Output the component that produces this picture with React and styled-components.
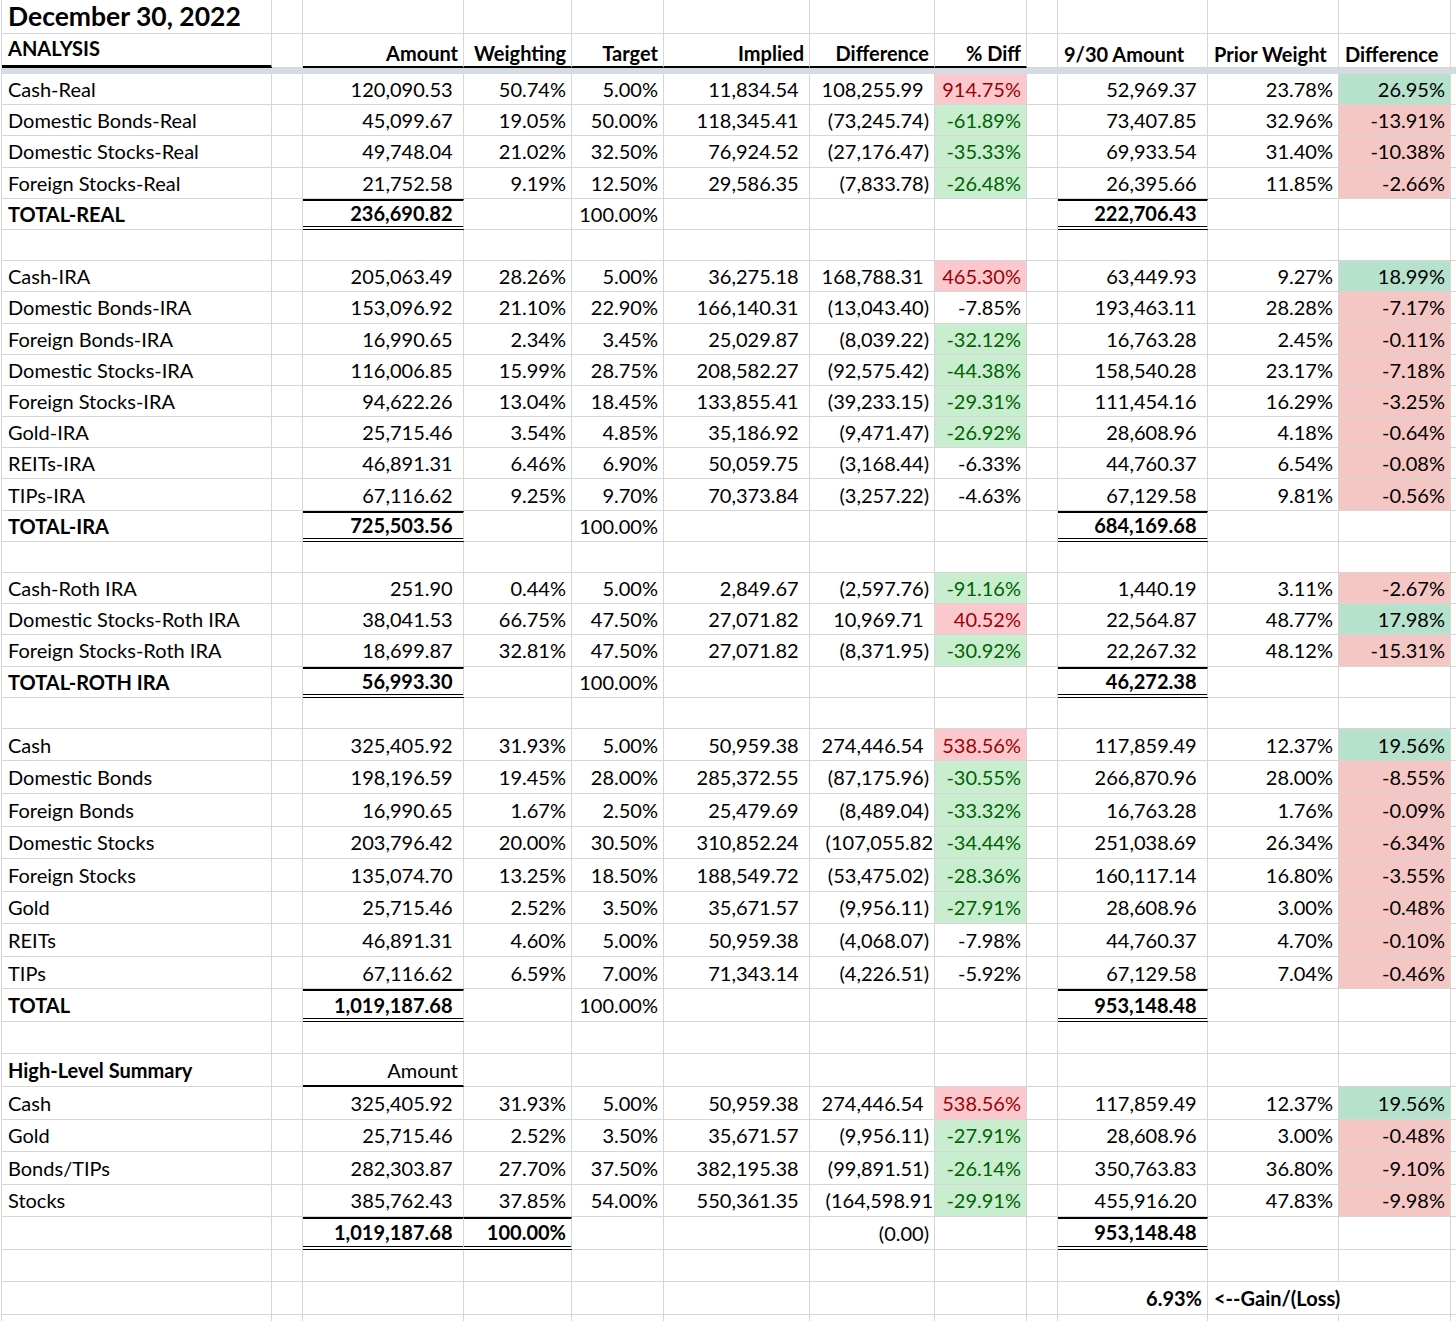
import React from "react";
import styled, { createGlobalStyle, css } from "styled-components";

const GlobalStyle = createGlobalStyle`
  html, body {
    margin: 0;
    padding: 0;
    background: #fff;
  }
  body {
    font-family: Lato, "Open Sans", sans-serif;
    color: #000;
  }
`;

const GRID = "#d6d6d6";
const COLS =
  "270px 31px 161px 108px 92px 146px 125px 92px 31px 150px 131px 112px 1fr";

const tones = {
  bad: { bg: "#fbc9cd", fg: "#9c0006" },
  good: { bg: "#c8eecf", fg: "#006100" },
  up: { bg: "#b6e1cd", fg: "#000" },
  down: { bg: "#f4c7c4", fg: "#000" },
};

const Sheet = styled.div`
  width: 1456px;
  padding-left: 1px;
  box-sizing: border-box;
`;

const Row = styled.div`
  display: grid;
  grid-template-columns: ${COLS};
  height: ${({ $h }) => $h}px;
  border-left: 1px solid ${GRID};
`;

const Freeze = styled.div`
  height: 6px;
  background: #d6dae1;
`;

const Cell = styled.div`
  box-sizing: border-box;
  display: flex;
  align-items: center;
  justify-content: ${({ $left }) => ($left ? "flex-start" : "flex-end")};
  padding: 0 5px 0 6px;
  min-width: 0;
  border-right: 1px solid ${({ $open }) => ($open ? "transparent" : GRID)};
  border-bottom: 1px solid ${GRID};
  font-size: 20px;
  line-height: 20px;
  font-weight: ${({ $bold }) => ($bold ? 700 : 400)};
  white-space: nowrap;
  background: ${({ $tone }) => ($tone ? tones[$tone].bg : "transparent")};
  color: ${({ $tone }) => ($tone ? tones[$tone].fg : "#000")};

  ${({ $under }) =>
    $under &&
    css`
      border-bottom: 2px solid #000;
    `}
  ${({ $sum }) =>
    $sum &&
    css`
      border-top: 2px solid #000;
      border-bottom: 4px double #000;
    `}
  ${({ $clip }) =>
    $clip &&
    css`
      padding-right: 1px;
    `}
`;

const TitleCell = styled(Cell)`
  align-items: flex-end;
  padding-bottom: 4px;
  font-size: 26.5px;
  line-height: 26px;
  font-weight: 700;
`;

const HeadCell = styled(Cell)`
  align-items: ${({ $mid }) => ($mid ? "center" : "flex-end")};
  padding-bottom: ${({ $mid }) => ($mid ? "4px" : "3px")};
  font-weight: 700;
  ${({ $rule }) =>
    $rule &&
    css`
      border-bottom: ${$rule}px solid #000;
    `}
`;

const Paren = styled.span`
  visibility: hidden;
`;

const TOP = 31.19;
const LOW = 32.56;

const ACCT = [2, 5, 6, 9];

const diffTone = (v) => {
  const n = parseFloat(v);
  if (n > 0) return "bad";
  if (n <= -25) return "good";
  return undefined;
};

const data = (label, v, h) => ({ kind: "data", label, v, h });
const total = (label, amount, prior, h) => ({ kind: "total", label, amount, prior, h });
const blank = (h) => ({ kind: "blank", h });

const rows = [
  data("Cash-Real", ["120,090.53", "50.74%", "5.00%", "11,834.54", "108,255.99", "914.75%", "52,969.37", "23.78%", "26.95%"], TOP),
  data("Domestic Bonds-Real", ["45,099.67", "19.05%", "50.00%", "118,345.41", "(73,245.74)", "-61.89%", "73,407.85", "32.96%", "-13.91%"], TOP),
  data("Domestic Stocks-Real", ["49,748.04", "21.02%", "32.50%", "76,924.52", "(27,176.47)", "-35.33%", "69,933.54", "31.40%", "-10.38%"], TOP),
  data("Foreign Stocks-Real", ["21,752.58", "9.19%", "12.50%", "29,586.35", "(7,833.78)", "-26.48%", "26,395.66", "11.85%", "-2.66%"], TOP),
  total("TOTAL-REAL", "236,690.82", "222,706.43", TOP),
  blank(TOP),
  data("Cash-IRA", ["205,063.49", "28.26%", "5.00%", "36,275.18", "168,788.31", "465.30%", "63,449.93", "9.27%", "18.99%"], TOP),
  data("Domestic Bonds-IRA", ["153,096.92", "21.10%", "22.90%", "166,140.31", "(13,043.40)", "-7.85%", "193,463.11", "28.28%", "-7.17%"], TOP),
  data("Foreign Bonds-IRA", ["16,990.65", "2.34%", "3.45%", "25,029.87", "(8,039.22)", "-32.12%", "16,763.28", "2.45%", "-0.11%"], TOP),
  data("Domestic Stocks-IRA", ["116,006.85", "15.99%", "28.75%", "208,582.27", "(92,575.42)", "-44.38%", "158,540.28", "23.17%", "-7.18%"], TOP),
  data("Foreign Stocks-IRA", ["94,622.26", "13.04%", "18.45%", "133,855.41", "(39,233.15)", "-29.31%", "111,454.16", "16.29%", "-3.25%"], TOP),
  data("Gold-IRA", ["25,715.46", "3.54%", "4.85%", "35,186.92", "(9,471.47)", "-26.92%", "28,608.96", "4.18%", "-0.64%"], TOP),
  data("REITs-IRA", ["46,891.31", "6.46%", "6.90%", "50,059.75", "(3,168.44)", "-6.33%", "44,760.37", "6.54%", "-0.08%"], TOP),
  data("TIPs-IRA", ["67,116.62", "9.25%", "9.70%", "70,373.84", "(3,257.22)", "-4.63%", "67,129.58", "9.81%", "-0.56%"], TOP),
  total("TOTAL-IRA", "725,503.56", "684,169.68", TOP),
  blank(TOP),
  data("Cash-Roth IRA", ["251.90", "0.44%", "5.00%", "2,849.67", "(2,597.76)", "-91.16%", "1,440.19", "3.11%", "-2.67%"], TOP),
  data("Domestic Stocks-Roth IRA", ["38,041.53", "66.75%", "47.50%", "27,071.82", "10,969.71", "40.52%", "22,564.87", "48.77%", "17.98%"], TOP),
  data("Foreign Stocks-Roth IRA", ["18,699.87", "32.81%", "47.50%", "27,071.82", "(8,371.95)", "-30.92%", "22,267.32", "48.12%", "-15.31%"], TOP),
  total("TOTAL-ROTH IRA", "56,993.30", "46,272.38", TOP),
  blank(TOP),
  data("Cash", ["325,405.92", "31.93%", "5.00%", "50,959.38", "274,446.54", "538.56%", "117,859.49", "12.37%", "19.56%"], LOW),
  data("Domestic Bonds", ["198,196.59", "19.45%", "28.00%", "285,372.55", "(87,175.96)", "-30.55%", "266,870.96", "28.00%", "-8.55%"], LOW),
  data("Foreign Bonds", ["16,990.65", "1.67%", "2.50%", "25,479.69", "(8,489.04)", "-33.32%", "16,763.28", "1.76%", "-0.09%"], LOW),
  data("Domestic Stocks", ["203,796.42", "20.00%", "30.50%", "310,852.24", "(107,055.82", "-34.44%", "251,038.69", "26.34%", "-6.34%"], LOW),
  data("Foreign Stocks", ["135,074.70", "13.25%", "18.50%", "188,549.72", "(53,475.02)", "-28.36%", "160,117.14", "16.80%", "-3.55%"], LOW),
  data("Gold", ["25,715.46", "2.52%", "3.50%", "35,671.57", "(9,956.11)", "-27.91%", "28,608.96", "3.00%", "-0.48%"], LOW),
  data("REITs", ["46,891.31", "4.60%", "5.00%", "50,959.38", "(4,068.07)", "-7.98%", "44,760.37", "4.70%", "-0.10%"], LOW),
  data("TIPs", ["67,116.62", "6.59%", "7.00%", "71,343.14", "(4,226.51)", "-5.92%", "67,129.58", "7.04%", "-0.46%"], LOW),
  total("TOTAL", "1,019,187.68", "953,148.48", LOW),
  blank(LOW),
  { kind: "summaryHead", h: LOW },
  data("Cash", ["325,405.92", "31.93%", "5.00%", "50,959.38", "274,446.54", "538.56%", "117,859.49", "12.37%", "19.56%"], LOW),
  data("Gold", ["25,715.46", "2.52%", "3.50%", "35,671.57", "(9,956.11)", "-27.91%", "28,608.96", "3.00%", "-0.48%"], LOW),
  data("Bonds/TIPs", ["282,303.87", "27.70%", "37.50%", "382,195.38", "(99,891.51)", "-26.14%", "350,763.83", "36.80%", "-9.10%"], LOW),
  data("Stocks", ["385,762.43", "37.85%", "54.00%", "550,361.35", "(164,598.91", "-29.91%", "455,916.20", "47.83%", "-9.98%"], LOW),
  { kind: "summaryTotal", h: LOW },
  blank(LOW),
  { kind: "gain", h: LOW },
  blank(LOW),
];

// puts a hidden ")" after positive accounting numbers, like Excel's _) format
const Num = ({ col, text }) => {
  if (!text) return null;
  const pad = ACCT.includes(col) && !text.startsWith("(") && !text.endsWith("%");
  return (
    <>
      {text}
      {pad && <Paren>)</Paren>}
    </>
  );
};

const Empty = ({ from = 0, to = 13 }) =>
  Array.from({ length: to - from }, (_, i) => <Cell key={from + i} />);

const DataRow = ({ label, v }) => {
  const [c, d, e, f, g, h, j, k, l] = v;
  const values = { 2: c, 3: d, 4: e, 5: f, 6: g, 7: h, 9: j, 10: k, 11: l };
  return (
    <>
      <Cell $left>{label}</Cell>
      {Array.from({ length: 12 }, (_, i) => {
        const col = i + 1;
        const text = values[col];
        let tone;
        if (col === 7) tone = diffTone(text);
        if (col === 11) tone = parseFloat(text) > 0 ? "up" : "down";
        const clip = col === 6 && text && !text.endsWith(")") && text.startsWith("(");
        return (
          <Cell key={col} $tone={tone} $clip={clip}>
            <Num col={col} text={text} />
          </Cell>
        );
      })}
    </>
  );
};

const TotalRow = ({ label, amount, prior }) => (
  <>
    <Cell $left $bold>
      {label}
    </Cell>
    <Cell />
    <Cell $bold $sum>
      <Num col={2} text={amount} />
    </Cell>
    <Cell />
    <Cell>100.00%</Cell>
    <Empty from={5} to={9} />
    <Cell $bold $sum>
      <Num col={9} text={prior} />
    </Cell>
    <Empty from={10} to={13} />
  </>
);

const renderRow = (row) => {
  switch (row.kind) {
    case "data":
      return <DataRow label={row.label} v={row.v} />;
    case "total":
      return <TotalRow label={row.label} amount={row.amount} prior={row.prior} />;
    case "summaryHead":
      return (
        <>
          <Cell $left $bold>
            High-Level Summary
          </Cell>
          <Cell />
          <Cell $under>Amount</Cell>
          <Empty from={3} to={13} />
        </>
      );
    case "summaryTotal":
      return (
        <>
          <Empty from={0} to={2} />
          <Cell $bold $sum>
            <Num col={2} text="1,019,187.68" />
          </Cell>
          <Cell $bold $sum>
            100.00%
          </Cell>
          <Empty from={4} to={6} />
          <Cell>(0.00)</Cell>
          <Empty from={7} to={9} />
          <Cell $bold $sum>
            <Num col={9} text="953,148.48" />
          </Cell>
          <Empty from={10} to={13} />
        </>
      );
    case "gain":
      return (
        <>
          <Empty from={0} to={9} />
          <Cell $bold>6.93%</Cell>
          <Cell $left $bold $open>
            &lt;--Gain/(Loss)
          </Cell>
          <Empty from={11} to={13} />
        </>
      );
    default:
      return <Empty />;
  }
};

const headers = ["Amount", "Weighting", "Target", "Implied", "Difference", "% Diff"];

const priorHeaders = ["9/30 Amount", "Prior Weight", "Difference"];

export default function App() {
  return (
    <>
      <GlobalStyle />
      <Sheet>
        <Row $h={34}>
          <TitleCell $left>December 30, 2022</TitleCell>
          <Empty from={1} to={13} />
        </Row>
        <Row $h={34}>
          <HeadCell $left $mid $rule={3}>
            ANALYSIS
          </HeadCell>
          <HeadCell />
          {headers.map((h, i) => (
            <HeadCell key={i} $rule={2}>
              {h}
            </HeadCell>
          ))}
          <HeadCell />
          {priorHeaders.map((h) => (
            <HeadCell key={h} $left>
              {h}
            </HeadCell>
          ))}
          <HeadCell />
        </Row>
        <Freeze />
        {rows.map((row, i) => (
          <Row key={i} $h={row.h}>
            {renderRow(row)}
          </Row>
        ))}
      </Sheet>
    </>
  );
}
